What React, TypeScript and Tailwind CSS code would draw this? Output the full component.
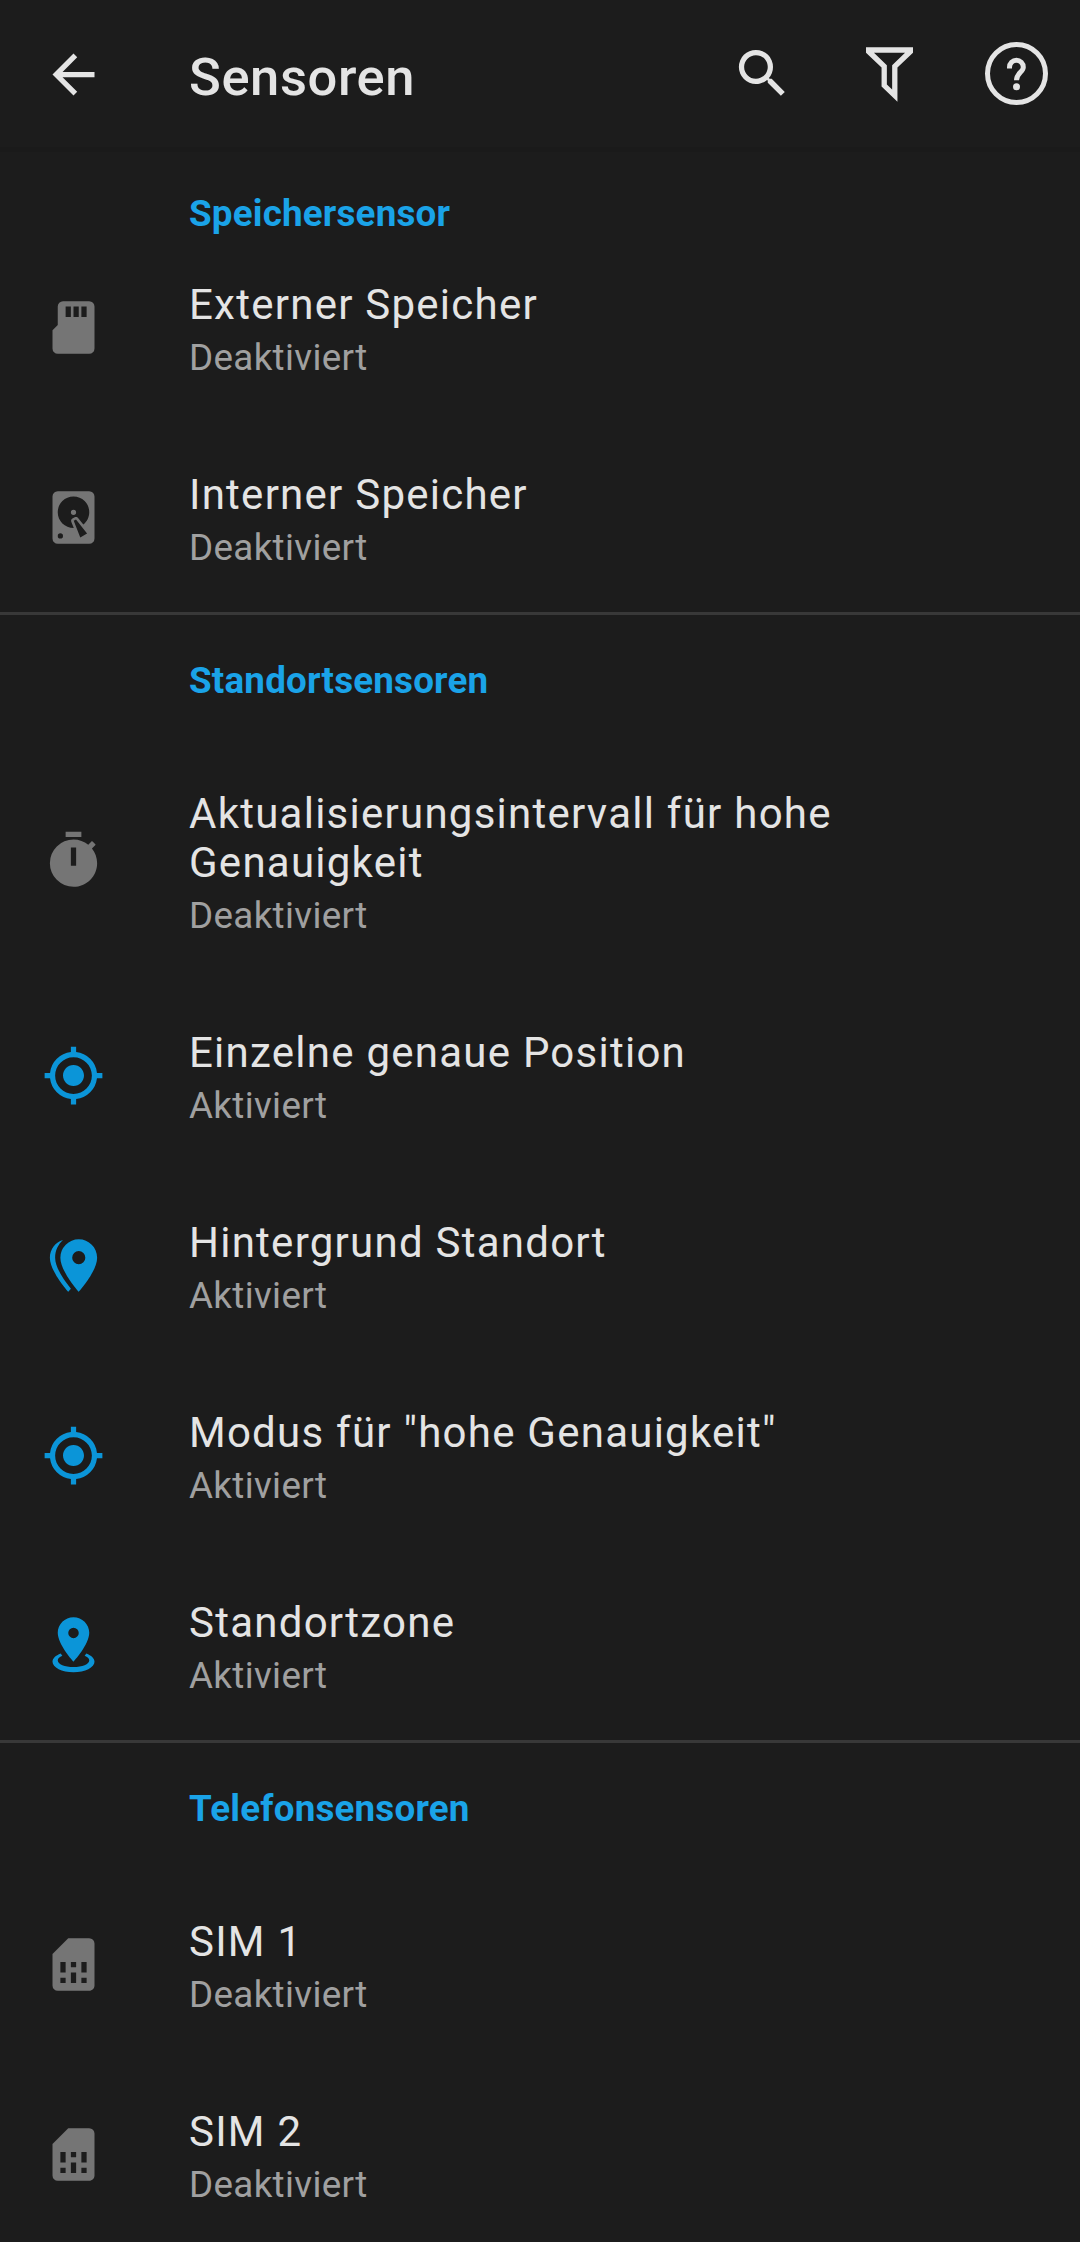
import React from "react";
import { MdArrowBack, MdMyLocation, MdSearch } from "react-icons/md";

const paths = {
  microSd:
    "M8,2A2,2 0 0,0 6,4V11L4,13V20A2,2 0 0,0 6,22H18A2,2 0 0,0 20,20V4A2,2 0 0,0 18,2H8M9,4H11V8H9V4M12,4H14V8H12V4M15,4H17V8H15V4Z",
  harddisk:
    "M6,2H18A2,2 0 0,1 20,4V20A2,2 0 0,1 18,22H6A2,2 0 0,1 4,20V4A2,2 0 0,1 6,2M12,4A6,6 0 0,0 6,10C6,13.31 8.69,16 12.1,16L11.22,13.77C10.95,13.29 11.11,12.68 11.59,12.4L12.45,11.9C12.93,11.63 13.54,11.79 13.82,12.27L15.74,14.69C17.12,13.59 18,11.9 18,10A6,6 0 0,0 12,4M12,9A1,1 0 0,1 13,10A1,1 0 0,1 12,11A1,1 0 0,1 11,10A1,1 0 0,1 12,9M7,18A1,1 0 0,0 6,19A1,1 0 0,0 7,20A1,1 0 0,0 8,19A1,1 0 0,0 7,18M12.09,13.27L14.58,19.58L17.17,18.08L12.95,12.77L12.09,13.27Z",
  timer:
    "M19.03,7.39L20.45,5.97C20,5.46 19.55,5 19.04,4.56L17.62,6C16.07,4.74 14.12,4 12,4A9,9 0 0,0 3,13A9,9 0 0,0 12,22C17,22 21,17.97 21,13C21,10.88 20.26,8.93 19.03,7.39M13,14H11V7H13M15,1H9V3H15V1Z",
  markers:
    "M14,11.5A2.5,2.5 0 0,0 16.5,9A2.5,2.5 0 0,0 14,6.5A2.5,2.5 0 0,0 11.5,9A2.5,2.5 0 0,0 14,11.5M14,2C17.86,2 21,5.13 21,9C21,14.25 14,22 14,22C14,22 7,14.25 7,9A7,7 0 0,1 14,2M5,9C5,13.5 10.08,19.66 11,20.81L10,22C10,22 3,14.25 3,9C3,5.83 5.11,3.15 8,2.29C6.16,3.94 5,6.33 5,9Z",
  zone:
    "M12,1.2C15.31,1.2 18,3.86 18,7.15C18,11.61 12,18.2 12,18.2C12,18.2 6,11.61 6,7.15C6,3.86 8.69,1.2 12,1.2M12,5.2A2,2 0 0,0 10,7.2A2,2 0 0,0 12,9.2A2,2 0 0,0 14,7.2A2,2 0 0,0 12,5.2M20,18.2C20,20.41 16.42,22.2 12,22.2C7.58,22.2 4,20.41 4,18.2C4,16.91 5.22,15.76 7.11,15.03L7.75,15.94C6.67,16.39 6,17.01 6,17.7C6,19.08 8.69,20.2 12,20.2C15.31,20.2 18,19.08 18,17.7C18,17.01 17.33,16.39 16.25,15.94L16.89,15.03C18.78,15.76 20,16.91 20,18.2Z",
  sim:
    "M20,4A2,2 0 0,0 18,2H10L4,8V20A2,2 0 0,0 6,22H18C19.11,22 20,21.1 20,20V4M9,19H7V17H9V19M17,19H15V17H17V19M9,15H7V11H9V15M13,19H11V15H13V19M13,13H11V11H13V13M17,15H15V11H17V15Z",
};

type IconName = keyof typeof paths | "location";

function RowIcon({ name }: { name: IconName }) {
  if (name === "location") return <MdMyLocation className="size-[63px]" />;
  return (
    <svg viewBox="0 0 24 24" fill="currentColor" fillRule="evenodd" className="size-[63px]">
      <path d={paths[name]} />
    </svg>
  );
}

interface Sensor {
  icon: IconName;
  title: string;
  on?: boolean;
}

const sections: { name: string; sensors: Sensor[] }[] = [
  {
    name: "Speichersensor",
    sensors: [
      { icon: "microSd", title: "Externer Speicher" },
      { icon: "harddisk", title: "Interner Speicher" },
    ],
  },
  {
    name: "Standortsensoren",
    sensors: [
      { icon: "timer", title: "Aktualisierungsintervall für hohe Genauigkeit" },
      { icon: "location", title: "Einzelne genaue Position", on: true },
      { icon: "markers", title: "Hintergrund Standort", on: true },
      { icon: "location", title: 'Modus für "hohe Genauigkeit"', on: true },
      { icon: "zone", title: "Standortzone", on: true },
    ],
  },
  {
    name: "Telefonsensoren",
    sensors: [
      { icon: "sim", title: "SIM 1" },
      { icon: "sim", title: "SIM 2" },
    ],
  },
];

function SensorRow({ icon, title, on }: Sensor) {
  return (
    <li className="flex items-center">
      <div className={`flex w-[189px] shrink-0 pl-[41.5px] ${on ? "text-[#0b95d8]" : "text-[#757575]"}`}>
        <RowIcon name={icon} />
      </div>
      <div className="w-[700px] pt-12 pb-[43px]">
        <p className="text-[42px] leading-[49px] tracking-[1.25px] text-[#e4e4e4]">{title}</p>
        <p className="mt-[7px] text-[36.75px] leading-[43px] tracking-[0.35px] text-[#a0a0a0]">
          {on ? "Aktiviert" : "Deaktiviert"}
        </p>
      </div>
    </li>
  );
}

export default function App() {
  return (
    <div className="h-[2242px] w-[1080px] overflow-hidden bg-[#1c1c1c] font-['Roboto',sans-serif]">
      <header className="flex h-[152px] items-center border-b-[5px] border-[#1a1a1a] text-[#e4e4e4]">
        <MdArrowBack className="mt-0.5 ml-[42px] size-[63px] shrink-0" />
        <h1 className="ml-[84px] pt-1.5 text-[52.5px] leading-[62px] font-medium tracking-[0.6px]">Sensoren</h1>
        <div className="ml-auto flex items-center">
          <div className="flex w-[127px] justify-center">
            <MdSearch className="size-[63px]" />
          </div>
          <div className="flex w-[127px] justify-center pt-0.5">
            <svg viewBox="0 0 142 164" fill="currentColor" fillRule="evenodd" className="h-[55px] w-[47px]">
              <path d="M0 0H142V16L95 61V164L47 118V61L0 16ZM24 16L63 54V112L79 127V54L118 16Z" />
            </svg>
          </div>
          <div className="flex w-[127px] justify-center">
            <svg viewBox="0 0 63 63" fill="none" stroke="currentColor" strokeWidth="5" className="size-[63px]">
              <circle cx="31.5" cy="31.5" r="29" />
              <path d="M24.5 26.5V25.2A6.9 6.9 0 0 1 38.3 25.2C38.3 30 31.5 31 31.5 38.2" />
              <circle cx="31.5" cy="44.8" r="3.5" fill="currentColor" stroke="none" />
            </svg>
          </div>
        </div>
      </header>
      <main>
        {sections.map((section, i) => (
          <section key={section.name} className={i > 0 ? "border-t-[3px] border-[#383838]" : ""}>
            <h2
              className={`pl-[189px] text-[36.75px] leading-[43px] font-bold tracking-[0.2px] text-[#1aa3e8] ${
                i > 0 ? "h-[126px] pt-11" : "h-20 pt-10"
              }`}
            >
              {section.name}
            </h2>
            <ul>
              {section.sensors.map((s) => (
                <SensorRow key={s.title} {...s} />
              ))}
            </ul>
          </section>
        ))}
      </main>
    </div>
  );
}
